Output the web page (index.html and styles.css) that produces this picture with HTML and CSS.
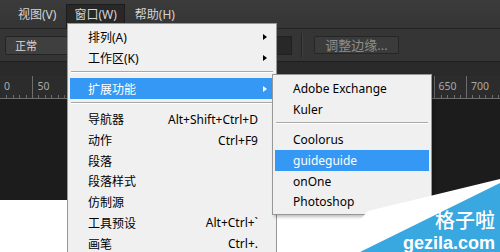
FILE: index.html
```html
<!DOCTYPE html>
<html lang="zh-CN">
  <head>
    <meta charset="UTF-8" />
    <title>窗口菜单</title>
    <link rel="stylesheet" href="styles.css">
  </head>
  <body>
    <div class="app">
      <div class="menubar">
        <span class="menubar-item">视图(V)</span>
        <span class="menubar-item active">窗口(W)</span>
        <span class="menubar-item">帮助(H)</span>
      </div>

      <div class="toolbar">
        <div class="select">正常</div>
        <div class="field"></div>
        <div class="divider"></div>
        <div class="btn">调整边缘...</div>
      </div>

      <div class="tabbar"></div>

      <div class="ruler">
        <div class="ruler-cell first">0</div>
        <div class="ruler-cell">50</div>
        <div class="ruler-gap"></div>
        <div class="ruler-cell">650</div>
        <div class="ruler-cell last">700</div>
      </div>

      <div class="canvas"></div>
      <div class="page"></div>

      <!-- 窗口 menu -->
      <div class="menu main-menu">
        <div class="item"><span class="label">排列(A)</span><span class="arrow"></span></div>
        <div class="item"><span class="label">工作区(K)</span><span class="arrow"></span></div>
        <div class="sep"></div>
        <div class="item hover"><span class="label">扩展功能</span><span class="arrow"></span></div>
        <div class="sep"></div>
        <div class="item"><span class="label">导航器</span><span class="key">Alt+Shift+Ctrl+D</span></div>
        <div class="item"><span class="label">动作</span><span class="key">Ctrl+F9</span></div>
        <div class="item"><span class="label">段落</span></div>
        <div class="item"><span class="label">段落样式</span></div>
        <div class="item"><span class="label">仿制源</span></div>
        <div class="item"><span class="label">工具预设</span><span class="key">Alt+Ctrl+`</span></div>
        <div class="item"><span class="label">画笔</span><span class="key">Ctrl+.</span></div>
      </div>

      <!-- 扩展功能 submenu -->
      <div class="menu sub-menu">
        <div class="item"><span class="label">Adobe Exchange</span></div>
        <div class="item"><span class="label">Kuler</span></div>
        <div class="sep"></div>
        <div class="item"><span class="label">Coolorus</span></div>
        <div class="item hover"><span class="label">guideguide</span></div>
        <div class="item"><span class="label">onOne</span></div>
        <div class="item"><span class="label">Photoshop</span></div>
      </div>

      <div class="watermark">
        <svg class="wm-shape" width="170" height="77" viewBox="0 0 170 77">
          <polygon points="38,36 170,4 170,77 0,77" fill="#ffffff" />
          <polygon points="30,77 170,8 170,77" fill="#3aa8e0" />
        </svg>
        <div class="wm-text">
          <span class="wm-cn">格子啦</span>
          <span class="wm-en">gezila.com</span>
        </div>
      </div>
    </div>
  </body>
</html>
```

FILE: styles.css
```css
body {
  margin: 0;
  background: #ffffff;
  font-family: "Noto Sans", "Noto Sans CJK SC", sans-serif;
}

.app {
  position: relative;
  width: 500px;
  height: 252px;
  overflow: hidden;
  display: flex;
  flex-direction: column;
}

/* top menu bar */
.menubar {
  height: 28px;
  flex: none;
  display: flex;
  align-items: flex-start;
  gap: 2px;
  padding-left: 10px;
  background: linear-gradient(#3b3b3b, #353535);
  box-sizing: border-box;
}

.menubar-item {
  margin-top: 4px;
  padding: 0 7px;
  height: 20px;
  line-height: 19px;
  font-size: 12px;
  color: #d4d4d4;
  border: 1px solid transparent;
  border-bottom: none;
}

.menubar-item.active {
  height: 24px;
  background: #282828;
  border-color: #1c1c1c;
}

/* options bar */
.toolbar {
  height: 34px;
  flex: none;
  display: flex;
  align-items: center;
  padding-left: 5px;
  background: #353535;
  border-top: 1px solid #232323;
  border-bottom: 1px solid #1e1e1e;
  box-sizing: border-box;
}

.select {
  width: 100px;
  height: 19px;
  padding-left: 9px;
  line-height: 18px;
  font-size: 11px;
  color: #dcdcdc;
  background: #3f3f3f;
  border: 1px solid #242424;
  border-radius: 2px;
  box-sizing: border-box;
}

.field {
  margin-left: 127px;
  width: 60px;
  height: 19px;
  background: #282828;
  border: 1px solid #202020;
  box-sizing: border-box;
}

.divider {
  margin-left: 9px;
  width: 1px;
  height: 24px;
  background: #242424;
  border-right: 1px solid #414141;
}

.btn {
  margin-left: 11px;
  width: 85px;
  height: 18px;
  line-height: 17px;
  text-align: center;
  font-size: 13px;
  color: #8c8c8c;
  background: #3b3b3b;
  border: 1px solid #262626;
  border-radius: 2px;
  box-sizing: border-box;
}

.tabbar {
  height: 14px;
  flex: none;
  background: #2a2a2a;
}

/* ruler */
.ruler {
  height: 23px;
  flex: none;
  display: flex;
  background: #2c2c2c;
  border-bottom: 1px solid #6e6e6e;
  box-sizing: border-box;
}

.ruler-cell {
  width: 32.4px;
  flex: none;
  padding: 4px 0 0 4px;
  font-size: 10.5px;
  line-height: 13px;
  color: #a9a9a9;
  border-left: 1px solid #6e6e6e;
  box-sizing: border-box;
  background: repeating-linear-gradient(to right, transparent 0 5.5px, #6e6e6e 5.5px 6.5px) bottom / 100% 3px no-repeat;
}

.ruler-cell.first {
  border-left-color: transparent;
  padding-left: 3px;
}

.ruler-cell.last {
  width: 34px;
}

.ruler-gap {
  flex: 1;
}

.canvas {
  height: 101px;
  flex: none;
  background: #1c1c1c;
}

.page {
  flex: 1;
  background: #ffffff;
}

/* dropdown menus */
.menu {
  position: absolute;
  background: #f0f0f0;
  border: 1px solid #979797;
  box-sizing: border-box;
  padding: 3px 2px 2px;
  font-size: 12px;
  color: #000000;
}

.main-menu {
  left: 67px;
  top: 23px;
  width: 210px;
  height: 240px;
}

.sub-menu {
  left: 272px;
  top: 74px;
  width: 160px;
  box-shadow: 2px 2px 3px rgba(0, 0, 0, 0.25);
}

.item {
  display: flex;
  align-items: center;
  height: 20.7px;
  padding: 0 7px 0 18px;
}

.item .label {
  flex: 1;
}

.item .key {
  margin-right: 9px;
}

.item .arrow {
  width: 0;
  height: 0;
  border-left: 4px solid #000000;
  border-top: 3.5px solid transparent;
  border-bottom: 3.5px solid transparent;
}

.item.hover {
  background: #3598f4;
  color: #ffffff;
}

.item.hover .arrow {
  border-left-color: #ffffff;
}

.sep {
  height: 1px;
  margin: 3px 1px 5px;
  background: #a8a8a8;
  border-bottom: 1px solid #ffffff;
}

/* watermark */
.watermark {
  position: absolute;
  right: 0;
  bottom: 0;
  width: 170px;
  height: 77px;
}

.wm-shape {
  display: block;
}

.wm-text {
  position: absolute;
  right: 5px;
  bottom: -1px;
  display: flex;
  flex-direction: column;
  align-items: flex-end;
  gap: 4px;
  color: #ffffff;
}

.wm-cn {
  font-family: "Noto Sans CJK SC", sans-serif;
  font-size: 20px;
  font-weight: 500;
  line-height: 20px;
}

.wm-en {
  font-family: "Liberation Sans", Arial, sans-serif;
  font-size: 18px;
  font-weight: bold;
  line-height: 19px;
}
```
